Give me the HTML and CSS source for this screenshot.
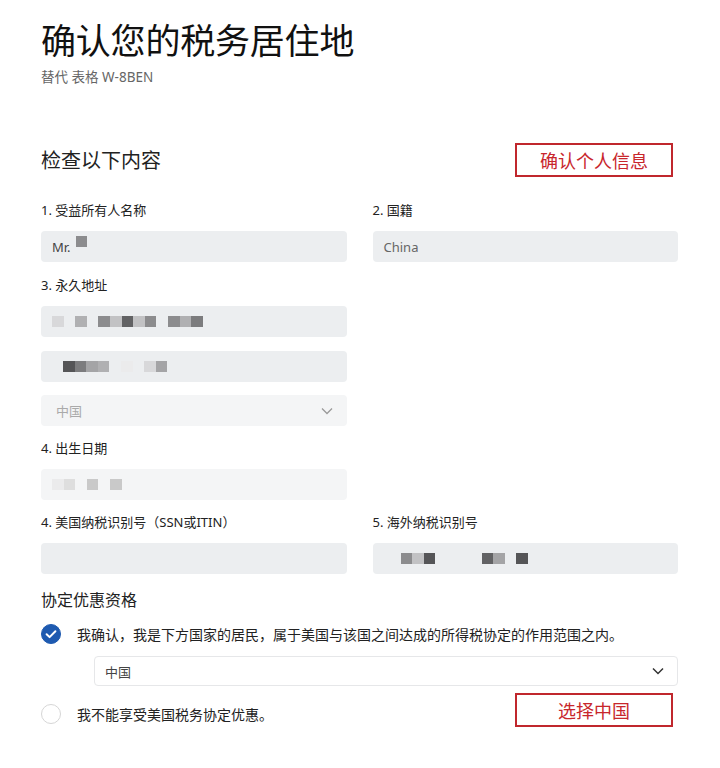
FILE: index.html
```html
<!DOCTYPE html>
<html lang="zh-CN">
<head>
<meta charset="utf-8">
<title>确认您的税务居住地</title>
<link rel="stylesheet" href="styles.css">
</head>
<body>
<main class="page">
  <h1 class="title">确认您的税务居住地</h1>
  <p class="subtitle">替代 表格 W-8BEN</p>

  <div class="section-head">
    <h2 class="section-title">检查以下内容</h2>
    <div class="note">确认个人信息</div>
  </div>

  <div class="grid first">
    <div class="field">
      <label class="label">1. 受益所有人名称</label>
      <div class="input filled">Mr.<span class="mosaic raised"><i class="c5"></i></span></div>
    </div>
    <div class="field">
      <label class="label">2. 国籍</label>
      <div class="input filled muted">China</div>
    </div>
  </div>

  <div class="grid">
    <div class="field">
      <label class="label">3. 永久地址</label>
      <div class="input filled"><span class="mosaic"><i class="c1"></i><i></i><i class="c3"></i><i></i><i class="c5"></i><i class="c2"></i><i class="c7"></i><i class="c2"></i><i class="c5"></i><i></i><i class="c5"></i><i class="c3"></i><i class="c6"></i></span></div>
      <div class="input filled gap-top indent2"><span class="mosaic"><i class="c8"></i><i class="c6"></i><i class="c4"></i><i class="c3"></i><i></i><i class="c0"></i><i></i><i class="c1"></i><i class="c4"></i></span></div>
      <div class="input light select sel-gap muted2">中国<svg class="chev" viewBox="0 0 12 8" width="12" height="8"><path d="M1 1.5 6 6.5 11 1.5" fill="none" stroke="currentColor" stroke-width="1.3"/></svg></div>
    </div>
  </div>

  <div class="grid tight">
    <div class="field">
      <label class="label">4. 出生日期</label>
      <div class="input light"><span class="mosaic"><i class="c0"></i><i class="c1b"></i><i></i><i class="c2b"></i><i></i><i class="c2b"></i></span></div>
    </div>
  </div>

  <div class="grid tight">
    <div class="field">
      <label class="label">4. 美国纳税识别号（SSN或ITIN）</label>
      <div class="input filled"></div>
    </div>
    <div class="field">
      <label class="label">5. 海外纳税识别号</label>
      <div class="input filled indent3"><span class="mosaic"><i class="c5"></i><i class="c2"></i><i class="c8"></i><i></i><i></i><i></i><i></i><i class="c7"></i><i class="c4"></i><i></i><i class="c8"></i></span></div>
    </div>
  </div>

  <h3 class="treaty-title">协定优惠资格</h3>

  <div class="option">
    <span class="radio checked"><svg viewBox="0 0 20 20" width="20" height="20"><path d="M5.6 10.2 8.6 13.1 14.4 7.3" fill="none" stroke="#fff" stroke-width="2" stroke-linecap="round" stroke-linejoin="round"/></svg></span>
    <span class="option-text">我确认，我是下方国家的居民，属于美国与该国之间达成的所得税协定的作用范围之内。</span>
  </div>

  <div class="country">
    <div class="input outline select">中国<svg class="chev" viewBox="0 0 12 8" width="12" height="8"><path d="M1 1.5 6 6.5 11 1.5" fill="none" stroke="currentColor" stroke-width="1.5"/></svg></div>
  </div>

  <div class="option last">
    <span class="radio"></span>
    <span class="option-text">我不能享受美国税务协定优惠。</span>
    <div class="note">选择中国</div>
  </div>
</main>
</body>
</html>
```

FILE: styles.css
```css
* { box-sizing: border-box; }

body {
  margin: 0;
  background: #ffffff;
  font-family: "Noto Sans", "Noto Sans CJK SC", sans-serif;
  color: #222;
}

.page {
  width: 720px;
  padding: 17px 42px 0 41px;
}

.title {
  margin: 0;
  font-family: "Noto Sans CJK SC", sans-serif;
  font-weight: 400;
  font-size: 35px;
  line-height: 44px;
  color: #111;
  letter-spacing: -0.2px;
}

.subtitle {
  margin: 7px 0 0;
  font-size: 13.5px;
  line-height: 18px;
  color: #666;
}

.section-head {
  margin-top: 57px;
  display: flex;
  align-items: center;
  justify-content: space-between;
  height: 34px;
}

.section-title {
  margin: 0;
  font-family: "Noto Sans CJK SC", sans-serif;
  font-weight: 400;
  font-size: 20px;
  line-height: 28px;
  color: #222;
}

.note {
  width: 158px;
  height: 34px;
  margin-right: 5px;
  border: 2px solid #c0272d;
  color: #c8262c;
  font-family: "Noto Sans CJK SC", sans-serif;
  font-size: 18px;
  line-height: 30px;
  text-align: center;
  flex: none;
}

.grid {
  display: grid;
  grid-template-columns: 1fr 1fr;
  column-gap: 26px;
  margin-top: 14px;
}

.grid.first { margin-top: 24px; }
.grid.tight { margin-top: 13px; }

.label {
  display: block;
  font-size: 13px;
  line-height: 18px;
  color: #222;
  margin-bottom: 12px;
}

.input {
  height: 31px;
  border-radius: 4px;
  display: flex;
  align-items: center;
  padding-left: 11px;
  font-size: 13px;
  color: #444;
}

.filled { background: #eceef0; }
.light { background: #f4f5f6; }
.muted { color: #666; }
.muted2 { color: #aaa; padding-left: 15px; }
.gap-top { margin-top: 14px; }
.sel-gap { margin-top: 13px; }

.input.select {
  justify-content: space-between;
  padding-right: 14px;
}

.chev { flex: none; }
.muted2 .chev { color: #9a9a9a; }

.indent2 { padding-left: 22px; }
.indent3 { padding-left: 28px; }

.mosaic {
  display: flex;
  height: 11px;
}
.mosaic i {
  width: 11.6px;
  height: 11px;
  display: block;
}
.mosaic.raised { margin-left: 5px; margin-bottom: 10px; }

.c0 { background: #ebebec; }
.c1 { background: #d8d8da; }
.c1b { background: #dedede; }
.c2 { background: #c2c2c4; }
.c2b { background: #c9c9c9; }
.c3 { background: #b0b0b2; }
.c4 { background: #a4a4a6; }
.c5 { background: #8c8c8e; }
.c6 { background: #7c7c7e; }
.c7 { background: #626264; }
.c8 { background: #555557; }

.treaty-title {
  margin: 14px 0 0;
  font-family: "Noto Sans CJK SC", sans-serif;
  font-weight: 400;
  font-size: 16px;
  line-height: 22px;
  color: #222;
}

.option {
  display: flex;
  align-items: center;
  margin-top: 14px;
  height: 20px;
}

.option.last {
  margin-top: 7px;
  height: 34px;
  align-items: flex-start;
}

.radio {
  width: 20px;
  height: 20px;
  border-radius: 50%;
  border: 1px solid #d6d6d6;
  background: #fff;
  flex: none;
  display: flex;
}
.radio.checked {
  background: #1e5ab0;
  border-color: #1e5ab0;
}
.radio.checked svg { margin: -1px; }

.option.last .radio { margin-top: 11px; }
.option.last .option-text { margin-top: 11px; flex: 1; }

.option-text {
  margin-left: 16px;
  font-family: "Noto Sans CJK SC", sans-serif;
  font-size: 14px;
  line-height: 20px;
  color: #222;
}

.country {
  margin: 12px 0 0 53px;
}

.input.outline {
  height: 30px;
  background: #fff;
  border: 1px solid #e6e7e9;
  padding-left: 10px;
  padding-right: 13px;
  color: #444;
}
.outline .chev { color: #333; }
```
